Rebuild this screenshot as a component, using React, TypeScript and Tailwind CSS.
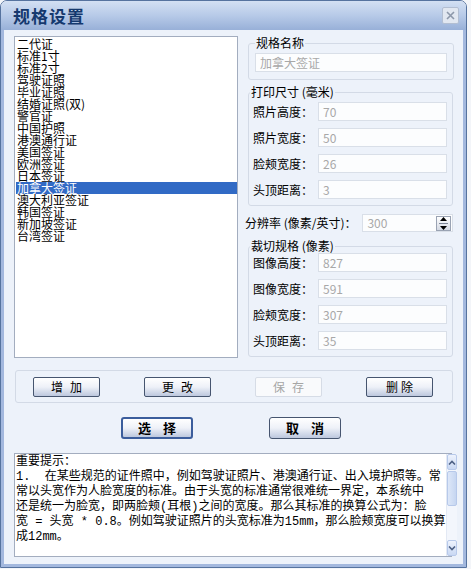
import React from 'react';

const FONT = { fontFamily: '"Noto Sans CJK SC", "Liberation Sans", sans-serif' };
const MONO = { fontFamily: '"Liberation Mono", "Noto Sans CJK SC", monospace' };

const ITEMS = [
  '二代证', '标准1寸', '标准2寸', '驾驶证照', '毕业证照', '结婚证照(双)', '警官证', '中国护照',
  '港澳通行证', '美国签证', '欧洲签证', '日本签证', '加拿大签证', '澳大利亚签证', '韩国签证',
  '新加坡签证', '台湾签证',
];

const PRINT = [
  ['照片高度：', '70'],
  ['照片宽度：', '50'],
  ['脸颊宽度：', '26'],
  ['头顶距离：', '3'],
];

const CROP = [
  ['图像高度：', '827'],
  ['图像宽度：', '591'],
  ['脸颊宽度：', '307'],
  ['头顶距离：', '35'],
];

const NOTE = [
  '重要提示：',
  '1.  在某些规范的证件照中，例如驾驶证照片、港澳通行证、出入境护照等。常',
  '常以头宽作为人脸宽度的标准。由于头宽的标准通常很难统一界定，本系统中',
  '还是统一为脸宽，即两脸颊(耳根)之间的宽度。那么其标准的换算公式为：脸',
  '宽 = 头宽 * 0.8。例如驾驶证照片的头宽标准为15mm，那么脸颊宽度可以换算',
  '成12mm。',
];

const Field = ({ value, className = '' }: { value: string; className?: string }) => (
  <div
    className={`h-[19px] bg-[#fcfdfe] border border-[#d9dfe8] px-[4px] text-[12px] leading-[17px] text-[#a8a8a8] ${className}`}
  >
    {value}
  </div>
);

const Group = ({ title, rows, first }: { title: string; rows: string[][]; first: number }) => (
  <fieldset className="ml-[3px] border border-[#d3dae6] rounded-[3px] pl-[4px] pr-[5px] pb-[6px]">
    <legend className="-ml-[3px] px-[1px] text-[12px] leading-[12px] text-black">{title}</legend>
    <div className="flex flex-col gap-[7px]" style={{ marginTop: first }}>
      {rows.map(([label, value]) => (
        <div key={label} className="flex items-center">
          <span className="w-[65px] text-[12px] leading-[12px] text-black whitespace-nowrap">{label}</span>
          <Field value={value} className="w-[129px]" />
        </div>
      ))}
    </div>
  </fieldset>
);

const Btn = ({ label, disabled, wide = true }: { label: string; disabled?: boolean; wide?: boolean }) => (
  <div
    className={`w-[67px] h-[20px] flex items-center justify-center rounded-[2px] text-[12px] ${
      wide ? 'tracking-[7px] pl-[7px]' : 'tracking-[3px] pl-[3px]'
    } ${
      disabled
        ? 'border border-[#d6dce6] bg-[#f9fafc] text-[#a6a6a6]'
        : 'border border-[#46556f] bg-gradient-to-b from-white via-[#eef1f8] to-[#bdc8de] text-black'
    }`}
  >
    {label}
  </div>
);

const BigBtn = ({ label, primary }: { label: string; primary?: boolean }) => (
  <div
    className={`w-[72px] h-[22px] flex items-center justify-center rounded-[3px] text-[13px] font-bold tracking-[12px] pl-[12px] text-black bg-gradient-to-b from-white via-[#eef1f8] to-[#bdc8de] ${
      primary ? 'border-2 border-[#3b5d9c]' : 'border border-[#46556f]'
    }`}
  >
    {label}
  </div>
);

export default function App() {
  return (
    <div className="w-[471px] h-[569px] bg-[#f3f5f9] overflow-hidden" style={FONT}>
      <div className="w-[467px] h-[568px] flex flex-col border border-[#56739f] rounded-t-[7px] overflow-hidden">
        {/* title bar */}
        <div className="h-[29px] shrink-0 flex items-center justify-between bg-gradient-to-b from-[#d3e0f3] via-[#b7cae8] to-[#98b0d8] pl-[12px] pr-[7px]">
          <span className="text-[17px] font-bold leading-[17px] text-[#15396e] tracking-[1px]">规格设置</span>
          <div className="w-[17px] h-[17px] border border-[#b2bed2] bg-[#e1e7f1] rounded-[2px] flex items-center justify-center">
            <svg width="9" height="9" viewBox="0 0 9 9">
              <path d="M1 1L8 8M8 1L1 8" stroke="#8c97aa" strokeWidth="1.6" />
            </svg>
          </div>
        </div>

        {/* body */}
        <div className="flex-1 flex flex-col bg-[#edf2fa] border-x-[3px] border-b-[3px] border-[#a3b8de] pl-[10px] pt-[6px]">
          <div className="flex h-[323px]">
            {/* list */}
            <div className="w-[224px] h-[322px] bg-white border border-[#a3adbf] pt-[1px] pl-[1px]">
              {ITEMS.map((it) => (
                <div
                  key={it}
                  className={`h-[12px] text-[12px] leading-[12px] pl-[1px] whitespace-nowrap ${
                    it === '加拿大签证' ? 'bg-[#316ac5] text-white' : 'text-black'
                  }`}
                >
                  {it}
                </div>
              ))}
            </div>

            {/* right column */}
            <div className="ml-[7px] w-[208px] flex flex-col">
              <fieldset className="ml-[3px] mt-[1px] border border-[#d3dae6] rounded-[3px] px-[6px] pb-[7px]">
                <legend className="px-[1px] text-[12px] leading-[12px] text-black">规格名称</legend>
                <Field value="加拿大签证" className="mt-[4px] w-[192px]" />
              </fieldset>

              <div className="mt-[6px]">
                <Group title="打印尺寸 (毫米)" rows={PRINT} first={4} />
              </div>

              <div className="mt-[8px] flex items-center">
                <span className="w-[118px] text-[12px] leading-[12px] text-black whitespace-nowrap">分辨率 (像素/英寸)：</span>
                <div className="w-[91px] h-[18px] bg-[#fcfdfe] border border-[#d9dfe8] flex items-center justify-between pl-[4px] pr-[1px]">
                  <span className="text-[12px] leading-[12px] text-[#a8a8a8]">300</span>
                  <div className="w-[15px] h-[15px] border border-[#9aa3b3] bg-gradient-to-b from-white to-[#d4d9e3] flex flex-col items-center justify-center gap-[2px]">
                    <svg width="7" height="4" viewBox="0 0 7 4"><path d="M0 4L3.5 0L7 4Z" fill="#000" /></svg>
                    <div className="w-[9px] h-[1px] bg-[#7c8596]" />
                    <svg width="7" height="4" viewBox="0 0 7 4"><path d="M0 0L3.5 4L7 0Z" fill="#000" /></svg>
                  </div>
                </div>
              </div>

              <div className="mt-[8px]">
                <Group title="裁切规格 (像素)" rows={CROP} first={1} />
              </div>
            </div>
          </div>

          {/* action buttons */}
          <div className="mt-[11px] ml-[1px] w-[438px] h-[33px] border border-[#d3dae6] rounded-[3px] flex items-center pl-[17px] gap-[44px]">
            <Btn label="增加" />
            <Btn label="更改" />
            <Btn label="保存" disabled />
            <Btn label="删除" wide={false} />
          </div>

          <div className="mt-[14px] flex pl-[107px] gap-[76px]">
            <BigBtn label="选择" primary />
            <BigBtn label="取消" />
          </div>

          {/* note */}
          <div className="mt-[14px] w-[438px] h-[104px] bg-white border border-[#a3adbf] flex">
            <div className="flex-1 pl-[1px] pt-[1px] text-[12px] leading-[15px] text-black" style={MONO}>
              {NOTE.map((l, i) => (
                <div key={i} className="whitespace-pre">{l}</div>
              ))}
            </div>
            <div className="w-[16px] flex flex-col bg-[#f3f6fc] border-l border-[#e3e9f4]">
              <div className="h-[16px] border border-[#b7c9ea] rounded-[2px] bg-gradient-to-b from-[#eef3fd] to-[#c9d8f3] flex items-center justify-center">
                <svg width="8" height="5" viewBox="0 0 8 5"><path d="M1 4.5L4 1.5L7 4.5" fill="none" stroke="#4d6185" strokeWidth="1.6" /></svg>
              </div>
              <div className="mt-[1px] h-[35px] border border-[#b7c9ea] rounded-[2px] bg-gradient-to-r from-[#dde7f8] to-[#c6d6f1]" />
              <div className="flex-1" />
              <div className="h-[16px] border border-[#b7c9ea] rounded-[2px] bg-gradient-to-b from-[#eef3fd] to-[#c9d8f3] flex items-center justify-center">
                <svg width="8" height="5" viewBox="0 0 8 5"><path d="M1 0.5L4 3.5L7 0.5" fill="none" stroke="#4d6185" strokeWidth="1.6" /></svg>
              </div>
            </div>
          </div>
        </div>
      </div>
    </div>
  );
}
